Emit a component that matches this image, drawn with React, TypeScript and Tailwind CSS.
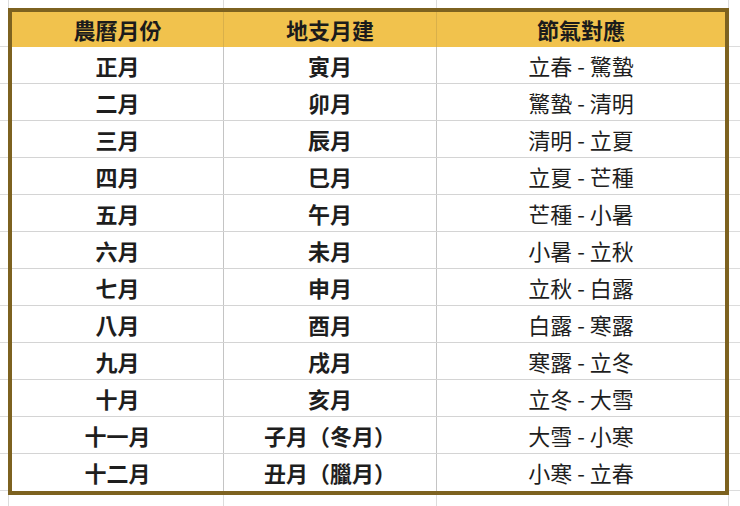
import React from 'react';

const rows: [string, string, string][] = [
  ['正月', '寅月', '立春 - 驚蟄'],
  ['二月', '卯月', '驚蟄 - 清明'],
  ['三月', '辰月', '清明 - 立夏'],
  ['四月', '巳月', '立夏 - 芒種'],
  ['五月', '午月', '芒種 - 小暑'],
  ['六月', '未月', '小暑 - 立秋'],
  ['七月', '申月', '立秋 - 白露'],
  ['八月', '酉月', '白露 - 寒露'],
  ['九月', '戌月', '寒露 - 立冬'],
  ['十月', '亥月', '立冬 - 大雪'],
  ['十一月', '子月（冬月）', '大雪 - 小寒'],
  ['十二月', '丑月（臘月）', '小寒 - 立春'],
];

const font = { fontFamily: '"Noto Sans CJK TC", "Noto Sans CJK SC", sans-serif' };

function GridStrip({ className }: { className: string }) {
  // strip of spreadsheet gridlines above / below the table
  return (
    <div className={`flex ${className}`}>
      <div className="w-[9px] border-r border-[#dcdcdc]" />
      <div className="w-[215px] border-r border-[#dcdcdc]" />
      <div className="w-[213px] border-r border-[#dcdcdc]" />
      <div className="w-[292px] border-r border-[#dcdcdc]" />
      <div className="flex-1" />
    </div>
  );
}

function SideStrip({ className }: { className: string }) {
  return (
    <div className={`flex flex-col ${className}`}>
      <div className="h-[39px] border-b border-[#dcdcdc]" />
      {rows.map((_, i) => (
        <div key={i} className="h-[37px] border-b border-[#dcdcdc]" />
      ))}
    </div>
  );
}

export default function App() {
  return (
    <div className="flex h-[506px] w-[740px] flex-col overflow-hidden bg-white" style={font}>
      <GridStrip className="h-[8px]" />
      <div className="flex">
        <SideStrip className="w-[8px]" />
        <div className="w-[721px] border-4 border-[#7d6220] bg-white">
          <div className="grid h-[35px] grid-cols-[212px_213px_288px] bg-[#f1c24d] text-[22px] font-bold text-[#1b1b1b]">
            <div className="flex items-center justify-center border-r border-[#d9b04a]">農曆月份</div>
            <div className="flex items-center justify-center border-r border-[#d9b04a]">地支月建</div>
            <div className="flex items-center justify-center">節氣對應</div>
          </div>
          {rows.map(([a, b, c], i) => (
            <div
              key={a}
              className={`grid h-[37px] grid-cols-[212px_213px_288px] text-[22px] text-[#1e1e1e] ${
                i < rows.length - 1 ? 'border-b border-[#d4d4d4]' : ''
              }`}
            >
              <div className="flex items-center justify-center border-r border-[#c4c4c4] font-bold">{a}</div>
              <div className="flex items-center justify-center border-r border-[#c4c4c4] font-bold">{b}</div>
              <div className="flex items-center justify-center">{c}</div>
            </div>
          ))}
        </div>
        <SideStrip className="flex-1" />
      </div>
      <GridStrip className="flex-1" />
    </div>
  );
}
